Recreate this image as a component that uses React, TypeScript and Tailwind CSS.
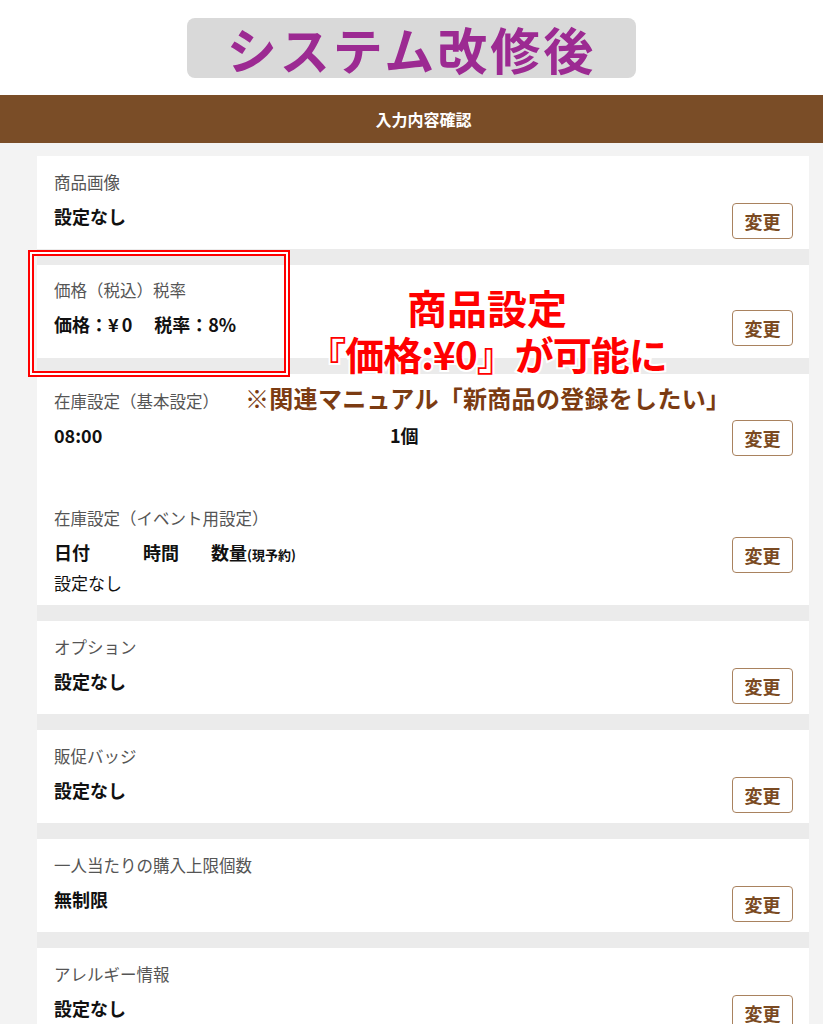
const jp = { fontFamily: '"Noto Sans CJK JP", "Noto Sans", sans-serif' }

function ChangeButton() {
  return (
    <button className="flex h-[36px] w-[61px] shrink-0 items-center justify-center rounded-[4px] border border-[#a9825f] bg-white text-[18px] font-bold text-[#7a4a22]">
      変更
    </button>
  )
}

function Card({ label, value }: { label: string; value: string }) {
  return (
    <div className="flex h-[93px] justify-between bg-white pl-[17px] pr-[16px] pt-[14px]">
      <div className="flex flex-col">
        <div className="text-[16.5px] leading-[24px] text-[#555]">{label}</div>
        <div className="mt-[10px] text-[18px] font-bold leading-[24px] text-[#111]">{value}</div>
      </div>
      <div className="mt-[33px]">
        <ChangeButton />
      </div>
    </div>
  )
}

export default function App() {
  return (
    <div style={jp} className="relative min-h-[1024px] bg-[#f3f3f3]">
      <div className="flex h-[95px] justify-center bg-white pt-[18px]">
        <div className="flex h-[60px] w-[449px] items-center justify-center rounded-[8px] bg-[#d9d9d9] text-[50px] font-bold tracking-[3px] text-[#9c2a92]">
          システム改修後
        </div>
      </div>
      <div className="flex h-[48px] items-center justify-center bg-[#7a4d27] pl-[24px] text-[16px] font-bold text-white">
        入力内容確認
      </div>
      <div className="pt-[13px]">
        <div className="ml-[37px] mr-[14px] flex flex-col gap-4 bg-[#ebebeb]">
          <Card label="商品画像" value="設定なし" />
          <div className="flex h-[93px] justify-between bg-white pl-[17px] pr-[16px] pt-[13px]">
            <div className="flex flex-col">
              <div className="text-[16.5px] leading-[24px] text-[#555]">価格（税込）税率</div>
              <div className="mt-[10px] text-[18px] font-bold leading-[24px] text-[#111]">
                価格：¥<span className="ml-[3px]">0</span>
                <span className="ml-[22px]">税率：8%</span>
              </div>
            </div>
            <div className="mt-[32px]">
              <ChangeButton />
            </div>
          </div>
          <div className="flex h-[231px] flex-col bg-white pl-[17px] pr-[16px] pt-[15px]">
            <div className="flex h-[117px] justify-between">
              <div className="flex flex-col">
                <div className="text-[16.5px] leading-[24px] text-[#555]">在庫設定（基本設定）</div>
                <div className="mt-[10px] flex text-[18px] font-bold leading-[24px] text-[#111]">
                  <span className="w-[336px]">08:00</span>
                  <span>1個</span>
                </div>
              </div>
              <div className="mt-[31px]">
                <ChangeButton />
              </div>
            </div>
            <div className="flex justify-between">
              <div className="flex flex-col">
                <div className="text-[16.5px] leading-[24px] text-[#555]">在庫設定（イベント用設定）</div>
                <div className="mt-[10px] flex items-baseline text-[18px] font-bold leading-[24px] text-[#111]">
                  <span className="w-[89px]">日付</span>
                  <span className="w-[68px]">時間</span>
                  <span>
                    数量<span className="text-[13px]">(現予約)</span>
                  </span>
                </div>
                <div className="mt-[4px] text-[17px] leading-[24px] text-[#111]">設定なし</div>
              </div>
              <div className="mt-[31px]">
                <ChangeButton />
              </div>
            </div>
          </div>
          <Card label="オプション" value="設定なし" />
          <Card label="販促バッジ" value="設定なし" />
          <Card label="一人当たりの購入上限個数" value="無制限" />
          <Card label="アレルギー情報" value="設定なし" />
        </div>
      </div>

      {/* annotation overlay */}
      <div className="absolute left-[28px] top-[250px] h-[127px] w-[262px] border-2 border-[#ff0000]">
        <div className="h-full w-full border-2 border-white">
          <div className="h-full w-full border-2 border-[#ff0000]" />
        </div>
      </div>
      <div className="absolute left-[287px] top-[285px] flex w-[400px] flex-col items-center gap-[2px] font-bold leading-[44px] text-[#ff0000] [-webkit-text-stroke:4px_white] [paint-order:stroke_fill]">
        <div className="text-[40px]">商品設定</div>
        <div className="text-[39px] tracking-[-1px]">『価格:¥0』が可能に</div>
      </div>
      <div className="absolute left-[245px] top-[382px] text-[24px] font-bold leading-[32px] tracking-[0.3px] text-[#7b3b12] [-webkit-text-stroke:4px_white] [paint-order:stroke_fill]">
        ※関連マニュアル「新商品の登録をしたい」
      </div>
    </div>
  )
}
